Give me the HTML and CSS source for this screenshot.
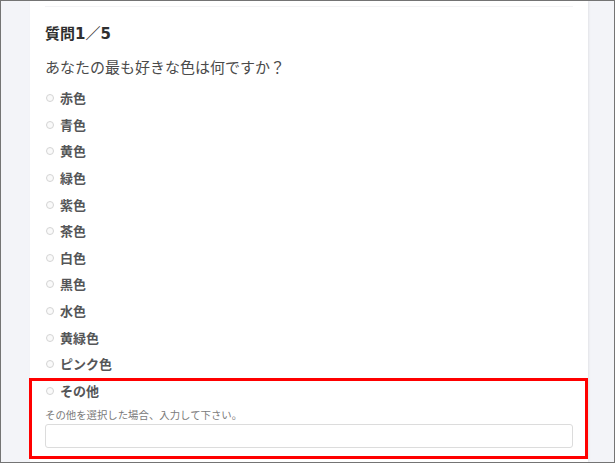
FILE: index.html
```html
<!DOCTYPE html>
<html lang="ja">
<head>
<meta charset="utf-8">
<link rel="stylesheet" href="styles.css">
</head>
<body>
<div class="page">
  <div class="card">
    <div class="top-rule"></div>
    <h2 class="q-title">質問1／5</h2>
    <p class="q-text">あなたの最も好きな色は何ですか？</p>
    <ul class="options">
      <li class="option"><span class="radio"></span><span class="label">赤色</span></li>
      <li class="option"><span class="radio"></span><span class="label">青色</span></li>
      <li class="option"><span class="radio"></span><span class="label">黄色</span></li>
      <li class="option"><span class="radio"></span><span class="label">緑色</span></li>
      <li class="option"><span class="radio"></span><span class="label">紫色</span></li>
      <li class="option"><span class="radio"></span><span class="label">茶色</span></li>
      <li class="option"><span class="radio"></span><span class="label">白色</span></li>
      <li class="option"><span class="radio"></span><span class="label">黒色</span></li>
      <li class="option"><span class="radio"></span><span class="label">水色</span></li>
      <li class="option"><span class="radio"></span><span class="label">黄緑色</span></li>
      <li class="option"><span class="radio"></span><span class="label">ピンク色</span></li>
    </ul>
    <div class="other">
      <div class="option"><span class="radio"></span><span class="label">その他</span></div>
      <div class="hint">その他を選択した場合、入力して下さい。</div>
      <div class="text-input"></div>
    </div>
  </div>
</div>
</body>
</html>
```
FILE: styles.css
```css
* { box-sizing: border-box; }
html, body { margin: 0; padding: 0; }
body {
  font-family: "Noto Sans CJK JP", "Noto Sans", sans-serif;
  background: #ffffff;
}
.page {
  width: 615px;
  height: 463px;
  border: 1px solid #747474;
  background: #f3f4f8;
  padding-left: 29px;
  overflow: hidden;
}
.card {
  width: 558px;
  height: 100%;
  background: #ffffff;
  padding: 0 15px;
  box-shadow: 1px 0 2px rgba(0, 0, 0, 0.07);
}
.top-rule {
  height: 6px;
  border-bottom: 1px solid #f3f3f5;
}
.q-title {
  margin: 16px 0 0;
  font-family: "DejaVu Sans", "Noto Sans CJK JP", sans-serif;
  font-size: 15px;
  line-height: 22px;
  font-weight: bold;
  color: #2f2f2f;
}
.q-text {
  margin: 11px 0 0;
  font-size: 15px;
  line-height: 22px;
  color: #4a4a4a;
}
.options {
  list-style: none;
  margin: 6.7px 0 0;
  padding: 0;
}
.option {
  display: flex;
  align-items: center;
  height: 26.64px;
}
.radio {
  width: 8px;
  height: 8px;
  margin-left: 1px;
  border: 1px solid #d4d4d4;
  border-radius: 50%;
  background: #fafafa;
  flex: none;
}
.label {
  margin-left: 6px;
  font-size: 13px;
  font-weight: bold;
  color: #555658;
  line-height: 18px;
}
.other {
  margin: 0 -15px 0 -16px;
  padding: 0 15px 11px 16px;
  outline: 3px solid #ff0000;
  outline-offset: -3px;
}
.hint {
  margin-top: 4px;
  font-size: 10.4px;
  line-height: 14px;
  color: #7a7a7a;
}
.text-input {
  margin-top: 2px;
  height: 24px;
  border: 1px solid #dcdcdc;
  border-radius: 3px;
  background: #fff;
}
```
